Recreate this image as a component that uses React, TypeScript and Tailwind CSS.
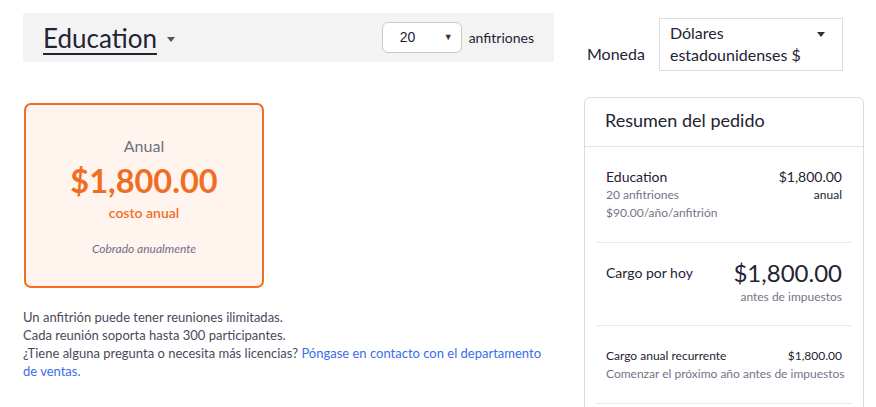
import React from 'react'

const lato = { fontFamily: 'Lato, "Open Sans", sans-serif' }

function Caret({ className = '' }: { className?: string }) {
  return (
    <svg width="8" height="5" viewBox="0 0 8 5" className={className}>
      <path d="M0 0h8L4 5z" fill="currentColor" />
    </svg>
  )
}

function Line({ left, right, sub }: { left: React.ReactNode; right?: React.ReactNode; sub?: boolean }) {
  return (
    <div className={`flex justify-between whitespace-nowrap ${sub ? 'text-[12px] text-[#747487]' : ''}`}>
      <span>{left}</span>
      {right && <span>{right}</span>}
    </div>
  )
}

export default function App() {
  return (
    <div className="flex h-[407px] w-[876px] overflow-hidden bg-white pl-[23px] text-[#232333]" style={lato}>
      {/* left column */}
      <div className="w-[531px] pt-[13px]">
        <div className="flex h-[49px] items-center rounded-[2px] bg-[#f3f3f3] pl-[20px] pr-[20px]">
          <span className="text-[26px] leading-none text-[#232333] underline decoration-2 underline-offset-[5px]">
            Education
          </span>
          <Caret className="ml-[10px] mt-[4px] text-[#555]" />
          <div className="ml-auto flex items-center">
            <div
              className="flex h-[31px] w-[80px] items-center justify-between rounded-[6px] border border-[#c8c8c8] bg-white pl-[17px] pr-[8px] text-[14px]"
              style={{ fontFamily: '"Liberation Sans", Arial, sans-serif' }}
            >
              <span>20</span>
              <span className="text-[9px] text-[#333]">▼</span>
            </div>
            <span className="ml-[7px] text-[14px]">anfitriones</span>
          </div>
        </div>

        <div className="ml-px mt-[41px] flex h-[185px] w-[240px] flex-col items-center rounded-[7px] border-2 border-[#f06d24] bg-[#fff4ee] pt-[31px]">
          <div className="text-[16px] leading-[20px] text-[#6e7083]">Anual</div>
          <div className="mt-[5px] text-[32.5px] font-bold leading-[40px] text-[#f06d24]">$1,800.00</div>
          <div className="mt-[3px] text-[14px] font-semibold leading-[18px] text-[#f06d24]">costo anual</div>
          <div className="mt-[19px] text-[12px] italic leading-[15px] text-[#6e7083]">Cobrado anualmente</div>
        </div>

        <div className="mt-[20px] text-[13px] leading-[18px] text-[#4a4a5a]">
          <p>Un anfitrión puede tener reuniones ilimitadas.</p>
          <p>Cada reunión soporta hasta 300 participantes.</p>
          <p>
            ¿Tiene alguna pregunta o necesita más licencias?{' '}
            <a className="text-[#3a6ee8]">Póngase en contacto con el departamento de ventas.</a>
          </p>
        </div>
      </div>

      {/* right column */}
      <div className="ml-[30px] w-[280px]">
        <div className="flex items-end pt-[18px]">
          <span className="mb-[7px] ml-[3px] text-[16px] leading-[20px]">Moneda</span>
          <div className="ml-[14px] flex h-[53px] w-[184px] items-start border border-[#dcdcdc] pl-[10px] pr-[17px] pt-[3px]">
            <span className="text-[16px] leading-[22px]">
              Dólares
              <br />
              estadounidenses $
            </span>
            <Caret className="ml-auto mt-[10px] text-[#333]" />
          </div>
        </div>

        <div className="mt-[26px] h-[330px] rounded-t-[6px] border border-[#dcdcdc]">
          <div className="flex h-[49px] items-center border-b border-[#e4e4e4] pb-[3px] pl-[20px] text-[18px]">
            Resumen del pedido
          </div>
          <div className="px-[11px]">
            <div className="h-[96px] border-b border-[#e9e9e9] px-[10px] pt-[21px] text-[14px] leading-[18px]">
              <Line left="Education" right="$1,800.00" />
              <Line sub left="20 anfitriones" right={<span className="text-[#232333]">anual</span>} />
              <Line sub left="$90.00/año/anfitrión" />
            </div>
            <div className="h-[83px] border-b border-[#e9e9e9] px-[10px] pt-[15px]">
              <div className="flex items-start justify-between">
                <span className="pt-[6px] text-[14px] leading-[18px]">Cargo por hoy</span>
                <span className="text-[24px] leading-[30px]">$1,800.00</span>
              </div>
              <div className="mt-[1px] text-right text-[12px] leading-[16px] text-[#747487]">antes de impuestos</div>
            </div>
            <div className="h-[78px] border-b border-[#e9e9e9] px-[10px] pt-[21px] text-[12px] leading-[18px]">
              <Line left="Cargo anual recurrente" right="$1,800.00" />
              <Line sub left="Comenzar el próximo año antes de impuestos" />
            </div>
          </div>
        </div>
      </div>
    </div>
  )
}
